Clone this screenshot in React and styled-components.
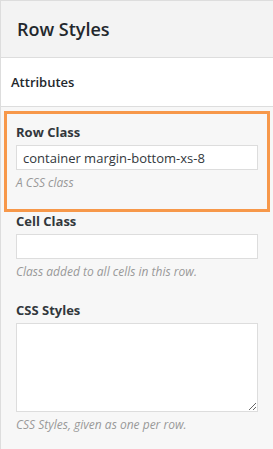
import React from "react"
import styled, { createGlobalStyle } from 'styled-components';

const GlobalStyle = createGlobalStyle`
	html, body {
		margin: 0;
		padding: 0;
		background: #f7f7f7;
	}
	body {
		font-family: "Open Sans", "Liberation Sans", sans-serif;
		color: #23282d;
	}
`

const Sidebar = styled.div`
	width: 273px;
	height: 449px;
	box-sizing: border-box;
	border-top: 1px solid #dddddd;
	border-left: 1px solid #dddddd;
	background: #f7f7f7;
	overflow: hidden;
`

const Header = styled.div`
	height: 56px;
	display: flex;
	align-items: center;
	padding-left: 16px;
	background: #f3f3f3;
	border-bottom: 1px solid #dddddd;
`

const Title = styled.h3`
	margin: 0;
	font-size: 18px;
	font-weight: 600;
	color: #23282d;
`

const SectionTab = styled.div`
	height: 48px;
	display: flex;
	align-items: center;
	padding-left: 10px;
	background: #ffffff;
	border-bottom: 1px solid #dddddd;
	font-size: 13px;
	font-weight: 600;
	color: #23282d;
`

const Body = styled.div`
	padding: 16px 15px 0 15px;
`

const Field = styled.div`
	display: flex;
	flex-direction: column;
	padding-bottom: 8px;
	margin-bottom: 12px;
	outline: ${props => props.highlighted ? '3px solid #f7984a' : 'none'};
	outline-offset: 9px;
`

const Label = styled.label`
	font-size: 13px;
	line-height: 19px;
	font-weight: 700;
	color: #32373c;
	margin-bottom: 3px;
`

const TextInput = styled.input`
	box-sizing: border-box;
	width: 100%;
	height: 25px;
	margin: 0;
	padding: 0 6px;
	border: 1px solid #dddddd;
	background: #ffffff;
	font-family: inherit;
	font-size: 13px;
	color: #32373c;
	outline: none;
`

const TextArea = styled.textarea`
	box-sizing: border-box;
	width: 100%;
	height: 89px;
	margin: 0;
	padding: 4px 6px;
	border: 1px solid #dddddd;
	background: #ffffff;
	font-family: inherit;
	font-size: 13px;
	display: block;
	outline: none;
`

const Help = styled.div`
	margin-top: 4px;
	font-size: 12px;
	line-height: 18px;
	font-style: italic;
	color: #999999;
`

const fields = [
	{ label: 'Row Class', value: 'container margin-bottom-xs-8', help: 'A CSS class', highlighted: true },
	{ label: 'Cell Class', value: '', help: 'Class added to all cells in this row.' },
	{ label: 'CSS Styles', value: '', help: 'CSS Styles, given as one per row.', multiline: true },
]

const App = () => {
	return (
		<>
			<GlobalStyle />
			<Sidebar>
				<Header>
					<Title>Row Styles</Title>
				</Header>
				<SectionTab>Attributes</SectionTab>
				<Body>
					{fields.map(field => (
						<Field key={field.label} highlighted={field.highlighted}>
							<Label>{field.label}</Label>
							{field.multiline
								? <TextArea defaultValue={field.value} />
								: <TextInput type="text" defaultValue={field.value} />}
							<Help>{field.help}</Help>
						</Field>
					))}
				</Body>
			</Sidebar>
		</>
	)
}

export default App
